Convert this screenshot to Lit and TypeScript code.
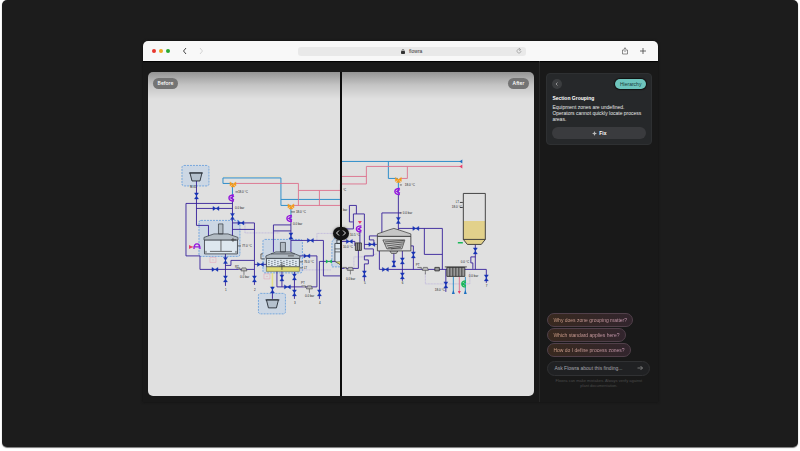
import { LitElement, html, css, svg } from "lit";
import { customElement, state } from "lit/decorators.js";

type Pt = [number, number];

// Bow-tie valve symbols, horizontal and vertical
const valveH = ([x, y]: Pt, cls = "valve") =>
  svg`<path class=${cls} d="M${x - 3} ${y - 2}L${x} ${y}L${x + 3} ${y - 2}V${y + 2}L${x} ${y}L${x - 3} ${y + 2}Z"/>`;
const valveV = ([x, y]: Pt) =>
  svg`<path class="valve" d="M${x - 2} ${y - 3}H${x + 2}L${x} ${y}L${x + 2} ${y + 3}H${x - 2}L${x} ${y}Z"/>`;
const threeWay = ([x, y]: Pt) =>
  svg`<path class="three" d="M${x - 3} ${y - 2}L${x} ${y}L${x + 3} ${y - 2}V${y + 2}L${x} ${y}L${x + 2} ${y + 3}H${x - 2}L${x} ${y}L${x - 3} ${y + 2}Z"/>`;
const control = ([x, y]: Pt) =>
  svg`<path class="control" d="M${x + 2} ${y - 3}Q${x - 3} ${y - 3} ${x - 3} ${y}T${x + 2} ${y + 3}M${x + 2} ${y - 2}L${x - 1} ${y}L${x + 2} ${y + 2}"/>`;
const pump = ([x, y]: Pt) =>
  svg`<path class="gear" d="M${x - 3} ${y + 1}H${x + 3}L${x + 2} ${y - 2}H${x - 2}ZM${x} ${y + 1}V${y + 5}M${x - 8} ${y - 2}H${x - 4}V${y}"/>`;
const zone = (x: number, y: number, w: number, h: number) =>
  svg`<rect class="zone" x=${x} y=${y} width=${w} height=${h} rx="2"/>`;
const bucket = ([x, y]: Pt) =>
  svg`<path class="tub" d="M${x - 6} ${y - 4}H${x + 6}L${x + 4} ${y + 4}H${x - 4}ZM${x - 7} ${y - 4}H${x + 7}"/>`;

const hValves: Pt[] = [[215, 208.5], [240, 223], [214, 269.5], [259.5, 264.5], [309.5, 240.5], [306, 256], [286.5, 287], [415, 228.5], [384.5, 269.5], [348.5, 241.5], [371, 244.5]];
const vValves: Pt[] = [[195.5, 196], [231.5, 216.5], [224.5, 260.5], [224.5, 279], [253.5, 279], [281, 278], [293.5, 277], [293.5, 293], [318.5, 293], [271.5, 290], [290, 236], [397.5, 220.5], [393, 264], [401.5, 261], [401.5, 276], [412.5, 255], [474.5, 251], [485.5, 278], [445, 285], [363.5, 274]];
const pipes = [
  "M195.5 181V225.5H207.5V237", "M231.5 203.5H185V256H199V269.5H253.5", "M195.5 208.5H231.5",
  "M231.5 201V245", "M231.5 223H253.5V285", "M231.5 229.5H253.5", "M224.5 254V286",
  "M224.5 265.5H230V260.5H253.5", "M253.5 264.5H265.5", "M290 219V252", "M272.5 252V225H290",
  "M272.5 231H290", "M290 240.5H322.5V276H340", "M299 256H316V287H276V271", "M281 271V287",
  "M293.5 272V299", "M340 261.5H318.5V299", "M271.5 287V299", "M397.5 194V230", "M400 213H381V233",
  "M397.5 228.5H441.5V269.5", "M423.5 228.5V254.5H441.5", "M378.5 251V269.5H485.5V283",
  "M393 253V266", "M401.5 251V281", "M410 246H412.5V269.5", "M474.5 244.5V269.5",
  "M474.5 257H470V263H472V269", "M445 269.5V292", "M352 222H348.5V205.5H355.5V214",
  "M344 229H352.5V214H363.5V249H372.5V256H363.5V260H367.5V264H363.5V281", "M359 231V243",
  "M357.5 250V268.5H341", "M341 241.5H354V246", "M377 236H368.5V240H373V244.5H363.5", "M376 244.5H367",
];
const tags: [number, number, string][] = [
  [237, 192.8, "18.0 °C"], [234, 209.5, "0.0 bar"], [189, 188, "M-01"], [241, 246.8, "77.0 °C"],
  [234, 268, "PT"], [239, 278.5, "0.0 bar"], [295, 213, "18.0 °C"], [292, 225.5, "0.0 bar"],
  [303, 263.5, "76.0 °C"], [303, 269, "LT"], [300, 284, "PT"], [304, 297, "0.0 bar"],
  [342, 191, "°C"], [342, 211, "bar"], [349, 236, "10.5 °C"], [342, 248, "10.0 °C"],
  [345, 280, "0.0 bar"], [404, 186, "18.0 °C"], [402, 213.8, "0.0 bar"], [415, 266, "PT"],
  [455, 203.5, "LT"], [451, 208.5, "18.0 °C"], [460, 263, "0.0 °C"], [468, 277, "0.0 bar"],
  [434, 291.5, "18.0 °C"], [224, 291, "1"], [253, 291, "2"], [293, 304, "3"], [318, 304, "4"],
  [363, 284, "5"], [401, 284, "6"], [485, 287, "7"],
];

const diagram = svg`
  <g>
    ${zone(181, 165.5, 27, 20.5)}${zone(198, 220.5, 41, 36)}${zone(262, 239.5, 39.5, 33.5)}${zone(257.5, 293.5, 27, 20.5)}
    <path class="zone" d="M340 238H334L331 242V267H340"/>
    <path class="signal" d="M244 223V233H279M316 240V233.500H340M424.500 273V284H469V272M353 268V257H363L376 254M299 270H330"/>
    <path class="cold" d="M232 183.500H222V178H280V205.500H290M280 199.500H340M341 161.500H461M387.500 161.500V178.500H397M231.500 185V201M290 207V220M397.500 181V194M452.500 277V293M464.500 277V293"/>
    <path class="pale" d="M222 176.500H279"/>
    <path class="hot" d="M234 183.500H297.500V205.500M297.500 190.500H339.500M318.500 190.500V205.500M292 205.500H339.500V184H365.500V166.500H461M341 176.500H365.500M406.500 166.500V178.500H399M458.500 277V293M189 247H193"/>
    <path class="coldFill" d="M461.500 159.500L458.500 161.500L461.500 163.500ZM451 294L452.500 290L454 294ZM463 294L464.500 290L466 294Z"/>
    <path class="hotFill" d="M461.500 164.500L458.500 166.500L461.500 168.500ZM457 291H460L458.500 294ZM188 245L192 247L188 249ZM357 221H361L359 224Z"/>
    <path class="yellow" d="M271.500 273V287"/>
    ${pipes.map((d) => svg`<path class="pipe" d=${d}/>`)}
    <path class="mark" d="M209 257.500H215V262.500H209ZM263 274H269V279H263ZM211 260H213M265 276.500H267"/>
  </g>
  <g>
    ${bucket([195, 177])}${bucket([271.5, 304])}
    <path class="vessel" d="M203.500 240H236.500V254H203.500Z"/>
    <path class="steel" d="M203 240V237.500L213 234H227L237 237.500V240ZM217.500 224H222V234H217.500Z"/>
    <path class="detail" d="M220 240V251M209 251.500H231M205 253V251M235 253V251M230 240H235M232 238V242M237 246H240"/>
    <path class="vessel" d="M265.500 258.500H298.500V267H265.500Z"/>
    <path class="lye" d="M265.500 267H298.500V271.500H265.500Z"/>
    <path class="steel" d="M265 258.500V256L275 252H289L299 256V258.500ZM279.500 242.500H284.500V252H279.500ZM270 254H294"/>
    <path class="bubbles" d="M268 260V266M271 261V267M274 260V266M277 261V267M280 260V266M283 261V267M286 260V266M289 261V267M292 260V266M295 261V267"/>
    <path class="detail" d="M262 254H260V259H264M281 262V270M278 266H284M287 256H293M299 262H302M299 268H302"/>
    <path class="steelR" d="M376.500 234L388 230L393 228.500L398 230L410 234V236.500H376.500ZM389 251H397L395.500 253.500H390.500Z"/>
    <path class="vesselR" d="M376.500 236.500H410V251H376.500Z"/>
    <path class="coil" d="M382 240H404L401 249H386ZM384 242L403 240.500M384 244L403 242M386 246L402 244M387 248L401 246M390 249L400 247.500"/>
    <path class="empty" d="M462.500 193.500H484.500V221H462.500Z"/>
    <path class="malt" d="M462.500 221H484.500V239.500L480.500 244.500H466.500L462.500 239.500Z"/>
    <path class="outline" d="M462.500 193.500H484.500V239.500L480.500 244.500H466.500L462.500 239.500ZM462.500 239.500H484.500M459 202.500H462M459 207.500H462"/>
    <path class="cooler" d="M446 267.500H464V276.500H446ZM449 267.500V276.500M452 267.500V276.500M455 267.500V276.500M458 267.500V276.500M461 267.500V276.500M444 267H466"/>
    <path class="cooler" d="M354.500 243H360.500V250.500H354.500ZM356.500 243V250.500M358.500 243V250.500M434 267.500H438.500V271H434Z"/>
    <path class="vessel" d="M334 243.500H340V265L334 261.500ZM336 240H340V243.500H336Z"/>
    <path class="detail" d="M340 271V280M334 249H340M334 252H340M234.500 192H237M290 212H294M401 185H399M399 213H401"/>
    <path class="lye" d="M335 262L340 265V261.500Z"/>
  </g>
  <g>
    ${hValves.map((p) => valveH(p))}${vValves.map((p) => valveV(p))}
    ${[[232, 184], [290, 206], [397.5, 179.5]].map((p) => threeWay(p as Pt))}
    ${[[231, 198], [289, 218.5], [397, 191.5], [358.5, 229]].map((p) => control(p as Pt))}
    <path class="control" d="M193 249Q193 244 196 244T199 249M194 247H198"/>
    <path class="green" d="M465 281Q461 281 461 284T465 287M465 282L462 284L465 286"/>
    ${valveH([328, 261.5], "greenFill")}
    <path class="greenFill" d="M457 242H462V243.500H457Z"/>
    ${[[243, 270], [308.5, 288], [349.5, 269.5], [424.5, 269.5]].map((p) => pump(p as Pt))}
    ${tags.map(([x, y, t]) => svg`<text x=${x} y=${y}>${t}</text>`)}
  </g>`;

@customElement("app-root")
export class AppRoot extends LitElement {
  @state() private split = 50;

  static styles = css`
    :host { display: block; background: #fff; font-family: "Liberation Sans", Arial, sans-serif; font-size: 5px; line-height: 6px; color: #e8e8e8; }
    * { box-sizing: border-box; }
    button, input { font: inherit; color: inherit; border: 0; padding: 0; margin: 0; background: none; }
    .stage { margin: 0 2px 3px; padding: 41px 0 45px; background: #1c1c1c; border-radius: 5px; box-shadow: 0 1px 1px #777; display: flex; justify-content: center; }
    .browser { width: 64.8%; margin-left: 1px; display: flex; flex-direction: column; border-radius: 6px 6px 0 0; background: #191919; box-shadow: 0 0 3px #101010; }
    .bar { height: 20px; padding: 0 11px 0 9px; display: grid; grid-template-columns: 6fr 228px 5fr; align-items: center; background: #f8f8f8; border-radius: 5px 5px 0 0; color: #444; box-shadow: 0 1px 1px #000; }
    .left, .right { display: flex; align-items: center; }
    .right { justify-content: flex-end; gap: 10px; }
    .dots { display: flex; gap: 3px; margin-right: 11px; }
    .dot { width: 4px; height: 4px; border-radius: 50%; background: #e8372f; }
    .amber { background: #eba821; }
    .lime { background: #28a830; }
    .nav { display: flex; gap: 8px; }
    .bar button, .back, .send { display: flex; align-items: center; justify-content: center; }
    svg { display: block; fill: none; stroke: currentColor; }
    .ico { width: 8px; height: 8px; }
    .faint { color: #c4c4c4; }
    .address { height: 9px; border-radius: 3px; background: #e9e9e9; display: grid; grid-template-columns: 1fr auto 1fr; align-items: center; padding: 0 3px; }
    .site { grid-column: 2; display: flex; align-items: center; gap: 4px; color: #333; }
    .lock { width: 4px; height: 5px; }
    .reload { justify-self: end; color: #888; }
    .body { display: flex; padding-left: 5px; }
    .canvas { position: relative; flex: 1; margin: 11px 5px 6px 0; border-radius: 5px; overflow: hidden; aspect-ratio: 387 / 324; background: linear-gradient(#949494, #c4c4c4 13px, #e0e0e0 27px); }
    .plan { width: 100%; height: 100%; }
    .badge { position: absolute; top: 6px; height: 11px; padding: 0 5px; border-radius: 6px; background: #747474; color: #fff; line-height: 11px; font-family: Inter, sans-serif; font-weight: 500; }
    .before { left: 5px; }
    .after { right: 5px; }
    .split { position: absolute; top: 0; bottom: 0; width: 2px; margin-left: -1px; background: linear-gradient(90deg, #0c0c0c 75%, #777); }
    .knob { position: absolute; top: 50%; left: 50%; width: 16px; height: 13px; margin: -7px -8px; border-radius: 7px; background: #141414; color: #ddd; display: flex; align-items: center; justify-content: center; box-shadow: 0 0 3px #0006; }
    .knob svg { width: 12px; height: 8px; }
    .slider { position: absolute; inset: 0; width: 100%; height: 100%; opacity: 0; }
    .side { width: 119px; flex: none; border-left: 1px solid #272727; padding: 12px 6px 14px; display: flex; flex-direction: column; justify-content: space-between; }
    .card { border: 1px solid #2e3032; border-radius: 4px; background: #26282a; padding: 5px; display: flex; flex-direction: column; }
    .top { display: flex; justify-content: space-between; align-items: center; }
    .back { width: 10px; height: 10px; border-radius: 50%; background: #3b3d3f; color: #aaa; }
    .pill { height: 10px; padding: 0 5px; line-height: 10px; border-radius: 5px; background: #6ec5bd; color: #173b38; box-shadow: 0 0 1px 1px #111; }
    h2 { font-size: 5px; line-height: 6px; margin: 6px 0 3px; font-weight: 600; color: #fff; }
    p { margin: 0; }
    .fix { height: 12px; margin-top: 5px; border-radius: 6px; background: #3a3b3e; color: #fff; font-weight: 600; display: flex; align-items: center; justify-content: center; gap: 2px; }
    .fix svg { width: 5px; height: 5px; }
    .ask { display: flex; flex-direction: column; align-items: flex-start; gap: 1px; padding: 0 2px 0 1px; }
    .chip { height: 14px; padding: 0 5px; border: 1px solid #51404a; border-radius: 7px; background: linear-gradient(90deg, #38291f, #32252d); }
    .chip span { background: linear-gradient(90deg, #d3a287, #c99bb5); background-clip: text; -webkit-background-clip: text; color: transparent; }
    .entry { align-self: stretch; height: 15px; margin-top: 3px; border: 1px solid #303133; border-radius: 8px; background: #202123; display: flex; align-items: center; padding: 0 5px 0 6px; color: #999; }
    .entry input { flex: 1; min-width: 0; height: 8px; outline: 0; }
    .entry input::placeholder { color: #a5a5ad; opacity: 1; }
    .note { align-self: center; font-size: 4px; line-height: 5px; color: #4b4b4b; text-align: center; padding: 0 5px; margin-top: 1px; }

    .pipe { stroke: #35209a; stroke-width: 0.9; }
    .cold { stroke: #2f8fca; stroke-width: 1; }
    .coldFill { fill: #1c6fc0; stroke: none; }
    .hot { stroke: #dc6f8c; stroke-width: 0.9; }
    .hotFill { fill: #e83e68; stroke: none; }
    .pale { stroke: #e8dfc2; stroke-width: 0.7; }
    .yellow { stroke: #e4df86; stroke-width: 1.6; }
    .signal { stroke: #b0a4da; stroke-width: 0.6; stroke-dasharray: 1 0.5; }
    .zone { fill: #ccd7e4; stroke: #5f9bdc; stroke-width: 0.8; stroke-dasharray: 2 1; }
    .mark { stroke: #e59bb5; stroke-width: 0.5; }
    .valve { fill: #1633b4; stroke: #1633b4; stroke-width: 0.4; }
    .three { fill: #f59a1a; stroke: #f59a1a; stroke-width: 0.4; }
    .control { stroke: #9414dc; stroke-width: 1.4; }
    .green { stroke: #18b857; stroke-width: 1.4; }
    .greenFill { fill: #18b857; stroke: none; }
    .tub { fill: #b5c1ce; stroke: #252b33; stroke-width: 0.9; }
    .vessel { fill: #dde7ef; stroke: #30363d; stroke-width: 0.8; }
    .vesselR { fill: #dedede; stroke: #333; stroke-width: 0.8; }
    .steel { fill: #b3bcc4; stroke: #30363d; stroke-width: 0.7; }
    .steelR { fill: #c6c6c6; stroke: #333; stroke-width: 0.7; }
    .detail { stroke: #333; stroke-width: 0.7; }
    .lye { fill: #dedb72; stroke: #55553a; stroke-width: 0.5; }
    .bubbles { stroke: #46515c; stroke-width: 1; stroke-dasharray: 1 1; }
    .coil { fill: #c5c5c5; stroke: #333; stroke-width: 0.7; }
    .empty { fill: #e0e0e0; stroke: none; }
    .malt { fill: #e2d18b; stroke: none; }
    .outline { stroke: #333; stroke-width: 0.9; }
    .cooler { fill: #999; stroke: #2c2c2c; stroke-width: 0.8; }
    .gear { fill: #bbb; stroke: #444; stroke-width: 0.6; }
    text { fill: #222; stroke: none; font-size: 3px; }
  `;

  private onSplit(e: Event) {
    this.split = Number((e.target as HTMLInputElement).value);
  }

  render() {
    return html`
      <main class="stage">
        <div class="browser">
          <header class="bar">
            <div class="left">
              <div class="dots"><i class="dot"></i><i class="dot amber"></i><i class="dot lime"></i></div>
              <nav class="nav">
                <button aria-label="Back"><svg class="ico" viewBox="0 0 8 8"><path d="M5 1L2.500 4L5 7"/></svg></button>
                <button class="faint" aria-label="Forward"><svg class="ico" viewBox="0 0 8 8"><path d="M3 1L5.500 4L3 7" stroke-width="0.7"/></svg></button>
              </nav>
            </div>
            <div class="address">
              <span class="site">
                <svg class="lock" viewBox="0 0 4 5"><path d="M0.500 2.500H3.500V4.500H0.500Z" fill="currentColor"/><path d="M1 2.500V1.500Q1 0.500 2 0.500T3 1.500V2.500" stroke-width="0.6"/></svg>
                flowra
              </span>
              <button class="reload" aria-label="Reload"><svg class="ico" viewBox="0 0 8 8"><path d="M5.500 2.700A2 2 0 1 0 6 4M4 1L5.700 2.600L4 3.600" stroke-width="0.6"/></svg></button>
            </div>
            <div class="right">
              <button aria-label="Share"><svg class="ico" viewBox="0 0 8 8"><path d="M3 3H1.500V7H6.500V3H5M4 5V0.800M2.700 2L4 0.800L5.300 2" stroke-width="0.6"/></svg></button>
              <button aria-label="New tab"><svg class="ico" viewBox="0 0 8 8"><path d="M4 1V7M1 4H7" stroke-width="0.8"/></svg></button>
            </div>
          </header>
          <div class="body">
            <section class="canvas" aria-label="Process diagram comparison">
              <svg class="plan" viewBox="147 72 387 324">${diagram}</svg>
              <span class="badge before">Before</span>
              <span class="badge after">After</span>
              <div class="split" style="left:${this.split}%">
                <span class="knob"><svg viewBox="0 0 12 8"><path d="M4 1.500L1.500 4L4 6.500M8 1.500L10.500 4L8 6.500"/></svg></span>
              </div>
              <input class="slider" type="range" min="0" max="100" aria-label="Compare before and after" .value=${String(this.split)} @input=${this.onSplit} />
            </section>
            <aside class="side">
              <article class="card">
                <div class="top">
                  <button class="back" aria-label="Previous finding"><svg class="ico" viewBox="0 0 8 8"><path d="M4.500 2.500L3 4L4.500 5.500" stroke-width="0.8"/></svg></button>
                  <span class="pill">Hierarchy</span>
                </div>
                <h2>Section Grouping</h2>
                <p>Equipment zones are undefined. Operators cannot quickly locate process areas.</p>
                <button class="fix"><svg viewBox="0 0 5 5"><path d="M2.500 0L3.200 1.800L5 2.500L3.200 3.200L2.500 5L1.800 3.200L0 2.500L1.800 1.800Z" fill="#bbb" stroke="none"/></svg>Fix</button>
              </article>
              <form class="ask" @submit=${(e: Event) => e.preventDefault()}>
                ${["Why does zone grouping matter?", "Which standard applies here?", "How do I define process zones?"].map(
                  (q) => html`<button type="button" class="chip"><span>${q}</span></button>`,
                )}
                <div class="entry">
                  <input type="text" aria-label="Ask about this finding" placeholder="Ask Flowra about this finding..." />
                  <button class="send" aria-label="Send"><svg class="ico" viewBox="0 0 8 8"><path d="M1.500 4H6.500M4.500 2L6.500 4L4.500 6" stroke-width="0.7"/></svg></button>
                </div>
                <p class="note">Flowra can make mistakes. Always verify against plant documentation.</p>
              </form>
            </aside>
          </div>
        </div>
      </main>`;
  }
}
